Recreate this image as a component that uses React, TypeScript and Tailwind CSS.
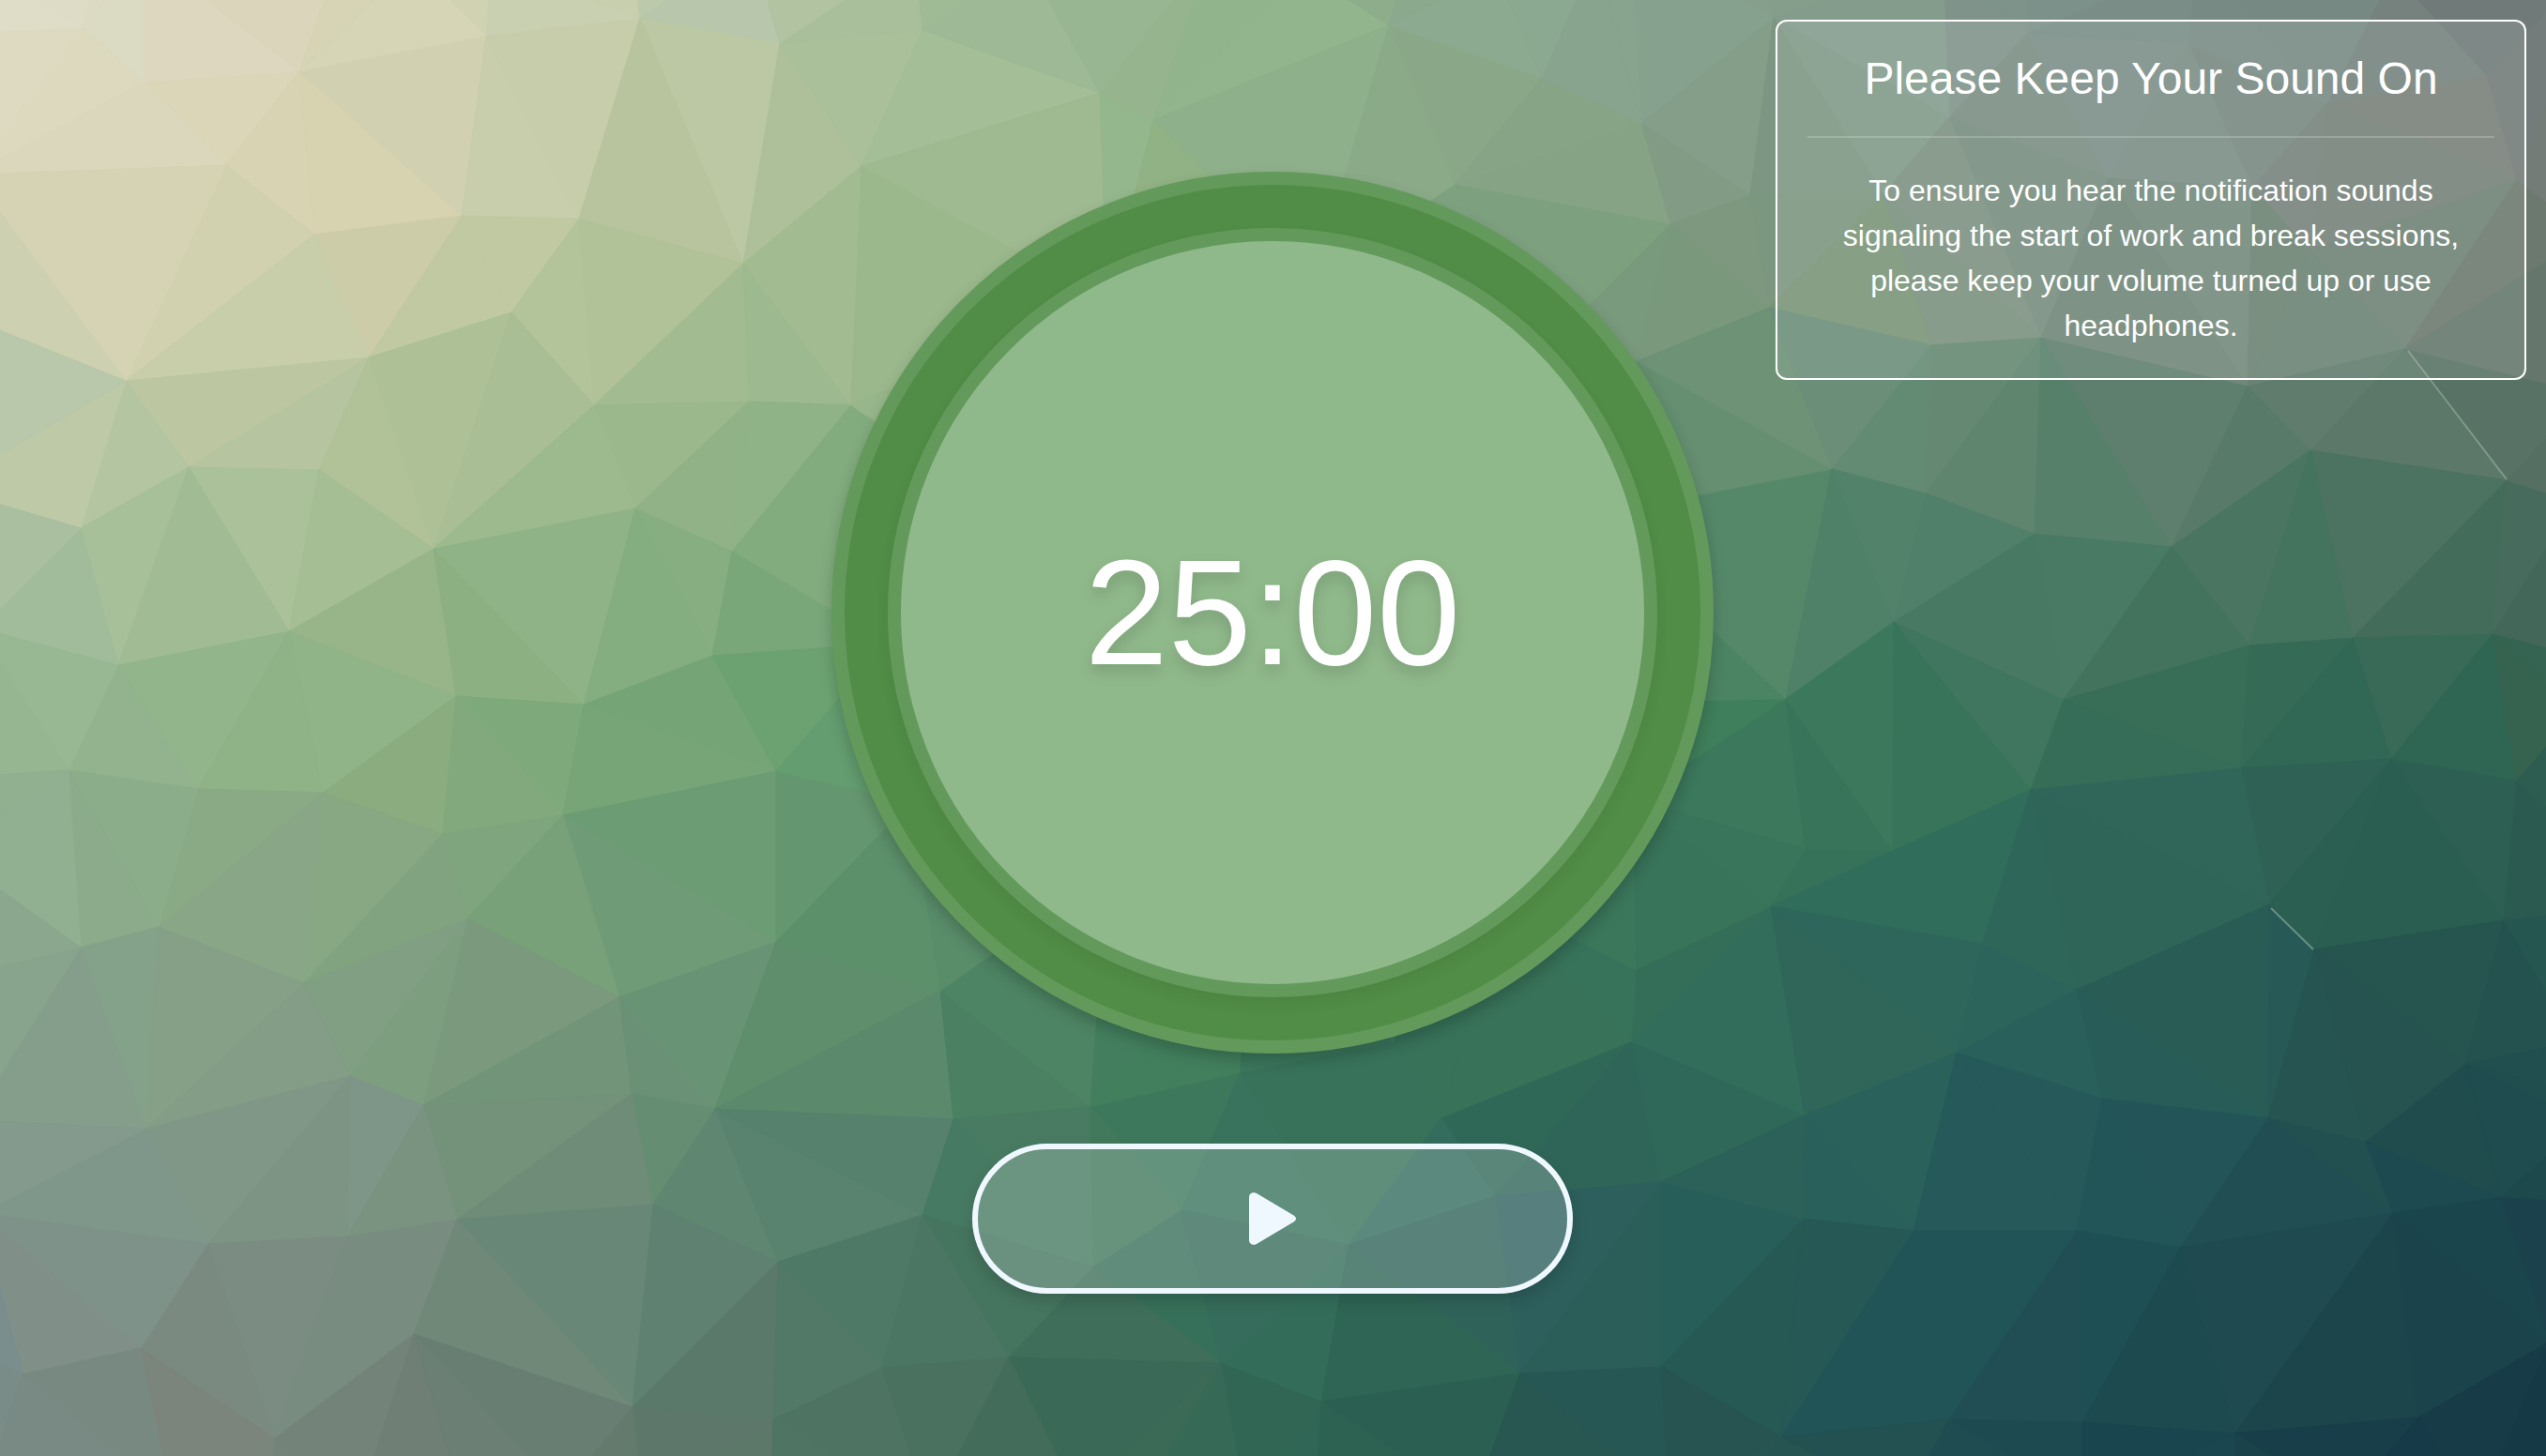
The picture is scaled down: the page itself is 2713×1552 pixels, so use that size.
import React, { useMemo } from "react";

type Point = [number, number];

const WIDTH = 2713;
const HEIGHT = 1552;

/* Corners of the low-poly mesh, as "x,y" pairs. */
const MESH = `
88,29 154,87 319,76 518,38 682,19 831,46 241,176 335,250 492,230 617,233 134,406 393,381 545,333 792,281
633,432 798,428 907,432 201,498 340,501 86,563 126,709 308,673 462,585 677,542 780,588 759,699 486,742 622,751
73,821 211,841 344,845 472,889 600,869 827,822 827,1004 86,1010 169,988 324,1048 498,979 660,1063 156,1203
373,1147 451,1178 673,1166 762,1182 221,1326 370,1318 487,1300 696,1284 829,1345 24,1465 150,1437 293,1533
441,1422 674,1500 824,1513 1002,1056 1016,1193 1162,1180 971,855 945,686 1322,1143 983,1295 1259,1290 1165,1351
1437,1327 1594,1275 1536,1191 1486,1110 1738,1110 1770,1260 1075,1447 940,1458 1301,1453 1408,1494 1620,1464
1770,1457 1903,745 1924,905 1887,966 1743,1034 1923,1189 1740,852 1695,550 1600,962 1700,749
983,32 918,177 1172,99 1229,128 1480,27 1643,83 1749,131 1550,197 1780,239 1890,18 1885,328 1744,385 1865,208
2160,35 2077,125 2332,47 2480,110 2650,80 2682,192 2247,190 2400,200 2175,360 2058,368 2007,207 2462,267
2563,372 2395,412 1952,500 2462,480 2671,512 2052,526 2168,569 2314,583 2018,663 2199,746 2397,688 2507,680
2656,676 2388,819 2548,809 2682,832 2164,842 2017,907 2418,964 2112,1006 2213,1055 2466,1012 2668,981
2085,1122 2240,1171 2417,1192 2521,1217 2628,1134 2665,1276 2550,1293 1922,1299 2039,1312 2213,1312 2323,1330
1898,1532 2077,1513 2219,1516 2382,1528 2577,1511 2717,1430
-30,186 -25,342 -60,520 -21,670 -60,830 -60,905 -60,1045 -30,1194 -20,1293 -40,1430 -20,1600 185,1600 285,1620
380,1610 495,1610 600,1590 685,1610 820,1610 990,1610 1150,1600 1190,1640 1330,1620 1400,1620 1570,1600
1780,1600 1830,1620 2030,1600 2219,1600 2382,1600 2500,1600 2640,1610 2735,1600 2760,420 2745,535 2750,700
2745,760 2750,890 2770,970 2745,1110 2760,1170 2755,1195 2750,1280 2760,250
-60,36 -60,-60 110,-60 154,-50 360,-40 440,-40 521,-40 675,-40 800,-60 975,-50 1090,-50 1290,-50 1390,-30
1500,-40 1595,-30 1700,-50 1740,-60 1870,-40 2070,-40 2160,-50 2340,-40 2550,-30 2780,-60
1180,930 1330,1000 1450,850 1250,700 1500,650 1100,560 1300,480 1550,450 1180,320 1400,300 1640,380
`;

/* Facet colours: a point inside the facet and the colour it takes. */
const SHADES = `
40,12,dfddc8 50,90,dcdac0 115,40,dbdac2 220,40,ddd7bf 420,20,d6d5b5 200,130,dbd6b8 90,120,ddd7be 300,160,d8d3b2
370,190,d7d2af 430,120,d1d1b2 150,250,d5d3b3 240,280,d1d1af 40,320,cdd1b1 290,340,c8ceaa 410,300,cccda8
520,280,c2c9a2 560,120,c8ceab 620,90,c6cdab 600,15,c9d0b1 730,90,bdc9a5 700,180,b8c49e 760,25,b8c7ab
30,440,b9c7aa 80,450,bfcaa8 220,440,bcc7a1 290,450,b6c59f 560,380,b4c39a 680,330,b2c298 130,500,b4c5a1
480,450,adc096 400,500,b1c198 20,590,a9bfa0 50,640,a0bc9b 120,600,a8c09a 200,620,a1bc95 280,560,aac19a
370,600,a5be93 550,500,9db98e 700,380,a3bb91 850,90,aec19b 820,200,acc09a 870,270,a3bb91 830,370,9db98f
710,480,9bb88d 780,500,91b286 860,520,88af82 420,680,98b589 500,680,8cb082 570,650,90b387 680,650,84ad80
730,610,87ae80 850,615,7ca879 820,660,79a77a 700,760,75a477 830,740,6ca272 50,750,97b892 130,790,92b38d
230,770,93b58b 280,790,8fb286 390,780,91b388 430,810,8aac7f 560,800,7ea97a 900,790,649d70
30,900,90b091 110,910,8bab8a 200,920,8aaa85 150,870,8cad8a 290,950,89a787 390,920,87a882 440,960,82a380
520,920,7ea57d 560,990,78a079 700,960,6f9b77 870,900,64976f 30,980,8ba78d 10,1100,89a48c 80,1100,859e8c
130,1100,84a289 220,1080,86a087 300,1130,849d86 400,1080,809f83 450,1090,7e9e80 520,1080,7b9a7d
600,1130,72957a 720,1100,6a9375 850,1080,5e8e6c 920,980,5c906b 50,1240,839a8c 100,1290,7f978a 250,1230,809787
320,1270,7d9484 390,1230,7e9687 440,1260,7a9381 540,1210,739279 620,1250,6e8c78 710,1210,658d71 760,1260,5f8671
100,1340,7e928a 60,1400,808f88 5,1430,7a8e8f 260,1400,7b8c82 420,1350,798c80 370,1430,798c80 80,1470,788a85
100,1520,78877f 220,1520,7b857b 380,1510,73837a 440,1510,707f76 560,1510,687e73 520,1400,6f8878 620,1370,698777
730,1370,5e8171 780,1450,5b796b 870,1440,527868 830,1280,5a8370 900,1210,56836d 880,1290,58836e 870,1530,4f7363
650,1530,647a6c 740,1530,5d786a 930,1120,5b896c 1080,1100,4d8463 1200,1140,42805f 1250,1120,427f5c
1050,1220,4a7c65 930,1240,55806d 1050,1270,477a62 1250,1180,3d785c 1380,1190,38735b 1560,1120,387359
940,1370,4f7967 1000,1380,4a7663 1080,1370,45755f 1190,1410,3f6f5b 1270,1380,37705a 1370,1400,336d5a
1470,1400,2f6555 1600,1380,2e6358 1700,1350,2c5f5b 1720,1400,2b5e59 980,1500,4a7160 1060,1500,466e5d
1110,1520,3f6a58 1200,1500,3b6957 1330,1500,316655 1480,1500,2b5f51 1660,1500,285651 1720,1480,265754
1600,1220,306858 1700,1200,2f6558 1080,1250,477a60 1200,1290,42795d 1360,1250,3a735d 1300,1350,366c5b
1500,1260,346d5e 1500,1330,2f6359 1640,1300,2f5f5f
1850,600,558869 1830,715,4c8462 1830,770,3f7f5b 1850,850,3b785c 1830,950,387459 1710,1000,3a785b 1700,1065,37735b
1780,1040,346e59 1830,1090,326d5b 1930,820,387459 1980,850,3b785b 1970,740,3b785d 2080,800,38745a 1950,630,4e8167
2030,590,548469 2000,560,50826a 2090,600,50806a 1830,480,648f6f 1880,430,6d9275 1960,430,6b8f77 2010,470,638b74
2070,450,668773 2130,500,5f856f 2190,490,57806b 2290,480,5f7f6e 2400,500,587a69 2450,430,607c6d 2550,450,5c7868
2640,440,5b7567 2700,460,556f63 2130,690,487863 2230,640,487a64 2290,690,43735c 2390,600,4a7561 2450,610,45745e
2560,570,4c7361 2600,630,436d5a 2700,620,43685a 2270,800,366d58 2340,770,386d58 2470,740,306855 2560,710,396a57
2620,770,2e6653 2690,750,36634f 2100,910,306d5b 1990,950,316d5b 1960,925,36715a 2260,960,2e6558 2150,930,2e695a
2330,870,306659 2440,870,2f6155 2480,960,2a5f52 2560,930,2a5e50 2620,880,2d5f52 2700,920,2b5b50 2710,830,2c5d50
1930,1080,2f6659 2050,1040,2e665b 2130,1080,2c645b 2160,970,2e6659 2170,1100,29605b 2350,1050,285c55
2430,1080,275a57 2260,1140,275c58 2550,1050,26544f 2480,1150,265451 2530,1120,265350 2690,1080,23524f
1850,1200,2f6759 2010,1200,2a625b 1870,1280,2b6159 1950,1270,2a605b 2120,1220,25595b 2170,1280,25585a
2270,1240,225557 2360,1250,235558 2430,1290,214e53 2610,1200,204c4e 2690,1200,1f4c4e 2590,1260,1d4a50
2700,1330,1b424c 1850,1370,285e59 1980,1400,265856 2050,1430,215457 2150,1380,215457 2180,1450,214e54
2250,1400,1e4f54 2310,1440,1d4a4f 2430,1400,1e4a50 2500,1460,1b444b 2620,1430,1b434b 2640,1330,1a454d
2690,1500,163a45 2150,1535,1c4a50 2000,1540,235050 1850,1535,27544f 2300,1540,19454f 2480,1540,183e49
2590,1545,163a47 1830,1480,265854
1100,20,9bb894 1040,110,a4be97 1040,50,a0bb97 1080,170,9fb990 950,300,9bb88c 1200,50,97b691 1190,180,94b78d
1220,220,93b383 1260,180,8eb085 1350,40,93b58d 1350,110,8eb08a 1470,130,8bab88 1540,100,8aa887 1560,40,8caa8f
1640,30,8ba890 1650,130,88a487 1700,50,88a38e 1810,50,86a18d 1820,120,849e89 1680,190,86a485 1810,190,829b85
1680,260,80a080 1580,230,78a07d 1800,310,7a997c 1840,270,7d987e 1800,400,6c9277
1920,60,829b8a 2000,100,81998a 2090,60,7f938a 2200,80,7c8f8a 2300,110,7b8f86 2400,100,798a82 2560,60,77837e
2560,140,788379 2650,140,777e77 2700,60,737c7a 2700,260,6c786d 2140,140,7b8f84 2030,170,7e9783 2060,260,7b917e
1960,240,7c977f 1920,180,7d9682 1990,300,789477 2130,270,7c9181 2200,250,758c7e 2250,290,708a7b 2320,220,748a7d
2330,330,728377 2400,150,77867f 2430,330,6c8273 2470,200,75817a 2500,350,698273 2540,270,6d8375 2610,250,718073
2650,300,6b7a70 1930,370,6b8e79 2090,390,648970 2290,390,5e7e6d
1950,10,86a08d 2050,20,81998b 2170,0,7c9189 2300,10,7a8e87 2400,10,778984 2560,10,73807b 2690,10,707b79
1300,800,5a9468
`;

const points: Point[] = MESH.trim()
  .split(/\s+/)
  .map((pair) => pair.split(",").map(Number) as Point);

const shades = SHADES.trim()
  .split(/\s+/)
  .map((entry) => {
    const [x, y, hex] = entry.split(",");
    const n = parseInt(hex, 16);
    return { x: Number(x), y: Number(y), rgb: [n >> 16, (n >> 8) & 255, n & 255] };
  });

type Shade = (typeof shades)[number];

/* Bowyer–Watson Delaunay triangulation. */
function triangulate(input: Point[]): Point[][] {
  const all: Point[] = [...input, [-30000, -20000], [30000, -20000], [0, 40000]];
  const n = input.length;
  const circle = (a: number, b: number, c: number) => {
    const [ax, ay] = all[a];
    const [bx, by] = all[b];
    const [cx, cy] = all[c];
    const d = 2 * (ax * (by - cy) + bx * (cy - ay) + cx * (ay - by));
    const a2 = ax * ax + ay * ay;
    const b2 = bx * bx + by * by;
    const c2 = cx * cx + cy * cy;
    const x = (a2 * (by - cy) + b2 * (cy - ay) + c2 * (ay - by)) / d;
    const y = (a2 * (cx - bx) + b2 * (ax - cx) + c2 * (bx - ax)) / d;
    return { v: [a, b, c], x, y, r: (ax - x) ** 2 + (ay - y) ** 2 };
  };
  let tris = [circle(n, n + 1, n + 2)];
  for (let i = 0; i < n; i++) {
    const [px, py] = all[i];
    const edges = new Map<string, [number, number]>();
    const keep: typeof tris = [];
    for (const t of tris) {
      if ((px - t.x) ** 2 + (py - t.y) ** 2 >= t.r) {
        keep.push(t);
        continue;
      }
      for (let k = 0; k < 3; k++) {
        const a = t.v[k];
        const b = t.v[(k + 1) % 3];
        const key = Math.min(a, b) + "_" + Math.max(a, b);
        if (edges.has(key)) edges.delete(key);
        else edges.set(key, [a, b]);
      }
    }
    edges.forEach(([a, b]) => keep.push(circle(a, b, i)));
    tris = keep;
  }
  return tris.filter((t) => t.v.every((k) => k < n)).map((t) => t.v.map((k) => all[k]));
}

function contains([a, b, c]: Point[], x: number, y: number) {
  const side = (p: Point, q: Point) => (q[0] - p[0]) * (y - p[1]) - (q[1] - p[1]) * (x - p[0]);
  const s = [side(a, b), side(b, c), side(c, a)];
  return s.every((v) => v >= 0) || s.every((v) => v <= 0);
}

function mix(entries: { s: Shade; w: number }[]) {
  const total = entries.reduce((sum, e) => sum + e.w, 0);
  return [0, 1, 2].map((k) => entries.reduce((sum, e) => sum + e.s.rgb[k] * e.w, 0) / total);
}

function facetColor(tri: Point[]) {
  const cx = Math.min(WIDTH, Math.max(0, (tri[0][0] + tri[1][0] + tri[2][0]) / 3));
  const cy = Math.min(HEIGHT, Math.max(0, (tri[0][1] + tri[1][1] + tri[2][1]) / 3));
  const near = shades
    .map((s) => ({ s, w: 1 / ((s.x - cx) ** 2 + (s.y - cy) ** 2 + 900) }))
    .sort((p, q) => q.w - p.w);
  const inside = shades.filter((s) => contains(tri, s.x, s.y)).map((s) => ({ s, w: 1 }));
  const own = mix(inside.length ? inside : near.slice(0, 4));
  const around = mix(near.slice(0, 8));
  const rgb = own.map((v, k) => Math.round(v * 0.8 + around[k] * 0.2));
  return `rgb(${rgb.join(",")})`;
}

function LowPolyBackground() {
  const facets = useMemo(
    () => triangulate(points).map((tri) => ({ d: tri.map((p) => p.join(",")).join(" "), fill: facetColor(tri) })),
    [],
  );
  return (
    <svg
      className="absolute inset-0 -z-10 h-full w-full"
      viewBox={`0 0 ${WIDTH} ${HEIGHT}`}
      preserveAspectRatio="xMidYMid slice"
      aria-hidden="true"
    >
      {facets.map((f, i) => (
        <polygon key={i} points={f.d} fill={f.fill} stroke={f.fill} strokeWidth="1" strokeLinejoin="round" />
      ))}
      <g stroke="#a9c4b0" strokeOpacity="0.5" strokeWidth="2">
        <path d="M2566 374 2671 511" />
        <path d="M2420 968 2465 1012" />
      </g>
    </svg>
  );
}

function SoundNotice() {
  return (
    <aside className="absolute top-[21px] right-[21px] w-[800px] max-w-full rounded-xl border-2 border-white bg-white/10 p-8 text-center text-white">
      <h2 className="border-b-2 border-white/20 pb-8 text-[48px] leading-[58px]">Please Keep Your Sound On</h2>
      <p className="pt-8 text-[32px] leading-[48px]">
        To ensure you hear the notification sounds signaling the start of work and break sessions, please keep your
        volume turned up or use headphones.
      </p>
    </aside>
  );
}

function TimerDial({ time }: { time: string }) {
  return (
    <div className="flex size-[940px] items-center justify-center rounded-full border-[14px] border-[#639a5c] bg-[#518d46] shadow-[0_8px_16px_rgba(0,0,0,0.2)]">
      <div className="flex size-[820px] items-center justify-center rounded-full border-[14px] border-[#639a5c] bg-[#90b98b] shadow-[0_8px_16px_rgba(0,0,0,0.06)]">
        <time className="text-[160px] leading-none text-white [text-shadow:0_8px_16px_rgba(0,0,0,0.15)]">{time}</time>
      </div>
    </div>
  );
}

function StartButton() {
  return (
    <button
      type="button"
      aria-label="Start timer"
      className="flex h-40 w-[640px] items-center justify-center rounded-full border-[6px] border-[#f0f8ff] bg-white/20 text-[#f0f8ff] shadow-[0_8px_16px_rgba(0,0,0,0.15)]"
    >
      <svg className="h-14 w-[50px]" viewBox="0 0 50 56" fill="currentColor" aria-hidden="true">
        <path d="M0 5C0 1 4.500-1.200 8 1L47.500 24.500C50.800 26.500 50.800 29.500 47.500 31.500L8 55C4.500 57.200 0 55 0 51Z" />
      </svg>
    </button>
  );
}

export default function App() {
  return (
    <div className="relative isolate min-h-screen overflow-hidden bg-[#5a9468] font-['Liberation_Sans',Helvetica,Arial,sans-serif]">
      <LowPolyBackground />
      <main className="flex min-h-screen flex-col items-center justify-center gap-24 pt-[10px] pr-px">
        <TimerDial time="25:00" />
        <StartButton />
      </main>
      <SoundNotice />
    </div>
  );
}
